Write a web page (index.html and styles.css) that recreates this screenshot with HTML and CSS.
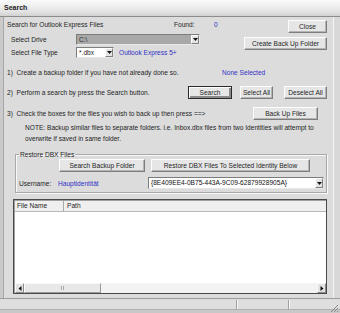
FILE: index.html
```html
<!DOCTYPE html>
<html>
<head>
<meta charset="utf-8">
<link rel="stylesheet" href="styles.css">
</head>
<body>
<div class="window">
  <div class="titlebar">Search</div>
  <div class="main">
    <div class="frame-l"></div>
    <div class="client">
      <div class="top">
        <div class="top-left">
          <div class="line"><span class="c-intro">Search for Outlook Express Files</span><span class="c-found">Found:</span><span class="blue">0</span></div>
          <div class="field f-drive"><span class="flabel">Select Drive</span>
            <div class="combo drive"><span class="cval">C:\</span><span class="arrow"><svg width="5" height="3" viewBox="0 0 5 3"><path d="M0 0H5L2.5 3Z" fill="#111"/></svg></span></div>
          </div>
          <div class="field f-type"><span class="flabel">Select File Type</span>
            <div class="combo ftype"><span class="cval">*.dbx</span><span class="arrow"><svg width="5" height="3" viewBox="0 0 5 3"><path d="M0 0H5L2.5 3Z" fill="#111"/></svg></span></div>
            <span class="blue oe">Outlook Express 5+</span>
          </div>
        </div>
        <div class="top-right">
          <button class="btn b-close">Close</button>
          <button class="btn b-create">Create Back Up Folder</button>
        </div>
      </div>
      <div class="line step1"><span class="s1">1)&nbsp; Create a backup folder if you have not already done so.</span><span class="blue">None Selected</span></div>
      <div class="brow step2"><span class="s2">2)&nbsp; Perform a search by press the Search button.</span>
        <button class="btn default b-search">Search</button>
        <button class="btn b-selall">Select All</button>
        <button class="btn b-desel">Deselect All</button>
      </div>
      <div class="brow step3"><span class="s3">3)&nbsp; Check the boxes for the files you wish to back up then press ==&gt;</span>
        <button class="btn b-backup">Back Up Files</button>
      </div>
      <div class="note">NOTE: Backup similar files to separate folders. i.e. Inbox.dbx files from two Identities will attempt to<br>overwrite if saved in same folder.</div>
      <fieldset class="group">
        <legend>Restore DBX Files</legend>
        <div class="grow1">
          <button class="btn b-sbf">Search Backup Folder</button>
          <button class="btn b-restore">Restore DBX Files To Selected Identity Below</button>
        </div>
        <div class="grow2">
          <span class="ulabel">Username:</span><span class="blue uname">Hauptidentität</span>
          <div class="combo ident"><span class="cval">{8E409EE4-0B75-443A-9C09-62879928905A}</span><span class="arrow"><svg width="5" height="3" viewBox="0 0 5 3"><path d="M0 0H5L2.5 3Z" fill="#111"/></svg></span></div>
        </div>
      </fieldset>
      <div class="list">
        <div class="lhead"><span class="col1">File Name</span><span class="col2">Path</span></div>
        <div class="lbody"></div>
        <div class="hscroll">
          <span class="sarrow"><svg width="4" height="5" viewBox="0 0 4 5"><path d="M3.5 0L0.5 2.5L3.5 5Z" fill="#111"/></svg></span>
          <span class="thumb"><span class="grip"></span></span>
          <span class="track"></span>
          <span class="sarrow"><svg width="4" height="5" viewBox="0 0 4 5"><path d="M0.5 0L3.5 2.5L0.5 5Z" fill="#111"/></svg></span>
        </div>
      </div>
    </div>
    <div class="frame-r"></div>
  </div>
  <div class="statusbar">
    <span class="panel p1"></span>
    <span class="panel p2"></span>
    <span class="panel p3"></span>
    <span class="sizegrip"><svg width="9" height="9" viewBox="0 0 9 9"><path d="M8 1L1 8M8 4L4 8M8 7L7 8" stroke="#8a8a8a" stroke-width="1"/></svg></span>
  </div>
  <div class="bottomframe"></div>
</div>
</body>
</html>
```
FILE: styles.css
```css
* { box-sizing: border-box; }
body {
  margin: 0;
  font-family: "Liberation Sans", Arial, sans-serif;
  font-size: 6.6px;
  color: #1e1e1e;
  background: #dcdcdc;
}
.window {
  width: 340px;
  height: 313px;
  background: #dcdcdc;
  display: flex;
  flex-direction: column;
  overflow: hidden;
}
.titlebar {
  height: 17px;
  flex: none;
  background: linear-gradient(#fbfbfb, #e4e4e4 70%, #d2d2d2);
  border-bottom: 1px solid #8c8c8c;
  font-weight: bold;
  font-size: 7px;
  line-height: 16px;
  padding-left: 4px;
  color: #222;
}
.main {
  height: 281px;
  flex: none;
  display: flex;
}
.frame-l {
  width: 4px;
  background: #cacaca;
  border-right: 1px solid #a6a6a6;
}
.frame-r {
  width: 7px;
  background: #d8d8d8;
  border-left: 1px solid #f6f6f6;
}
.client {
  flex: 1;
  padding: 2px 6px 0 3px;
}
.blue { color: #3030c4; }
.line {
  height: 11px;
  line-height: 11px;
  display: flex;
  white-space: nowrap;
}
.top { display: flex; }
.top-left { flex: 1; }
.top-right {
  display: flex;
  flex-direction: column;
  align-items: flex-end;
}
.c-intro { width: 167px; }
.c-found { width: 40px; }
.field {
  display: flex;
  align-items: center;
  height: 11px;
  padding-left: 4px;
  white-space: nowrap;
}
.f-drive { margin-top: 4px; }
.f-type { margin-top: 2px; }
.flabel { width: 65px; }
.combo {
  display: flex;
  align-items: stretch;
  height: 11px;
  border: 1px solid #7c7c7c;
  border-right-color: #e8e8e8;
  border-bottom-color: #e8e8e8;
  background: #fff;
}
.cval {
  flex: 1;
  padding-left: 2px;
  line-height: 9px;
  overflow: hidden;
  white-space: nowrap;
}
.arrow {
  width: 8px;
  display: flex;
  align-items: center;
  justify-content: center;
  background: #e4e4e4;
  border: 1px solid #fff;
  border-right-color: #808080;
  border-bottom-color: #808080;
}
.drive { width: 124px; background: #a8a8a8; }
.drive .cval { color: #2a2a2a; }
.ftype { width: 38px; }
.oe { margin-left: 5px; }
.btn {
  font: inherit;
  color: #1e1e1e;
  height: 13px;
  padding: 0;
  margin: 0;
  background: #e6e6e6;
  border: 1px solid #fdfdfd;
  border-right-color: #7d7d7d;
  border-bottom-color: #7d7d7d;
  box-shadow: inset -1px -1px 0 #b4b4b4;
  white-space: nowrap;
  line-height: 11px;
}
.btn.default {
  border: 1px solid #2a2a2a;
  box-shadow: inset 1px 1px 0 #fdfdfd, inset -2px -2px 0 #8a8a8a;
}
.b-close { width: 39px; margin-top: 1px; }
.b-create { width: 83px; margin-top: 4px; }
.step1 { margin-top: 9px; }
.s1 { width: 215px; }
.brow {
  display: flex;
  align-items: center;
  height: 13px;
  white-space: nowrap;
}
.step2 { margin-top: 8px; }
.s2 { width: 181px; }
.b-search { width: 44px; }
.b-selall { width: 33px; margin-left: 8px; }
.b-desel { width: 43px; margin-left: 11px; }
.step3 { margin-top: 8px; }
.s3 { width: 246px; }
.b-backup { width: 65px; }
.note {
  padding-left: 18px;
  line-height: 11px;
  margin-top: 2px;
  white-space: nowrap;
}
.group {
  margin: 7px 0 0 8px;
  padding: 1px 0 3px 0;
  border: 1px solid #a9a9a9;
  box-shadow: inset 1px 1px 0 #f8f8f8, 1px 1px 0 #f8f8f8;
  min-width: 0;
}
.group legend {
  margin-left: 3px;
  padding: 0 1px;
  line-height: 7px;
  height: 7px;
}
.grow1 {
  display: flex;
  padding-left: 43px;
}
.b-sbf { width: 86px; }
.b-restore { width: 159px; margin-left: 6px; }
.grow2 {
  display: flex;
  align-items: center;
  margin-top: 5px;
  padding-left: 3px;
  height: 12px;
  white-space: nowrap;
}
.ulabel { width: 39px; }
.uname { width: 90px; }
.ident { width: 176px; height: 12px; }
.ident .cval { line-height: 10px; color: #111; }
.list {
  margin: 6px 0 0 6px;
  height: 95px;
  border: 1px solid #4a4a4a;
  background: #fff;
  display: flex;
  flex-direction: column;
  box-shadow: inset 1px 1px 0 #a0a0a0;
}
.lhead {
  height: 11px;
  display: flex;
  line-height: 10px;
  background: #efefef;
  border-bottom: 1px solid #b8b8b8;
  margin: 1px 0 0 1px;
}
.col1 {
  width: 49px;
  padding-left: 2px;
  border-right: 1px solid #a8a8a8;
}
.col2 { padding-left: 3px; }
.lbody { flex: 1; }
.hscroll {
  height: 10px;
  display: flex;
  background: #f3f3f3;
  margin-left: 1px;
}
.sarrow {
  width: 9px;
  display: flex;
  align-items: center;
  justify-content: center;
  background: #e2e2e2;
  border: 1px solid #fafafa;
  border-right-color: #8a8a8a;
  border-bottom-color: #8a8a8a;
}
.thumb {
  width: 77px;
  display: flex;
  align-items: center;
  justify-content: center;
  background: #e8e8e8;
  border: 1px solid #fafafa;
  border-right-color: #9a9a9a;
  border-bottom-color: #9a9a9a;
}
.grip {
  width: 3px;
  height: 4px;
  border-left: 1px solid #aaa;
  border-right: 1px solid #aaa;
}
.track { flex: 1; }
.statusbar {
  height: 11px;
  flex: none;
  display: flex;
  border-top: 1px solid #9c9c9c;
  background: #dedede;
  position: relative;
}
.panel {
  height: 9px;
  margin-top: 1px;
  border-right: 1px solid #a0a0a0;
  box-shadow: 1px 0 0 #f6f6f6;
}
.p1 { width: 237px; }
.p2 { width: 51px; margin-left: 1px; }
.p3 { flex: 1; border-right: none; box-shadow: none; }
.sizegrip {
  position: absolute;
  right: 1px;
  bottom: -4px;
  width: 9px;
  height: 9px;
}
.bottomframe {
  flex: 1;
  background: #c8c8c8;
  border-top: 1px solid #b0b0b0;
}
```
